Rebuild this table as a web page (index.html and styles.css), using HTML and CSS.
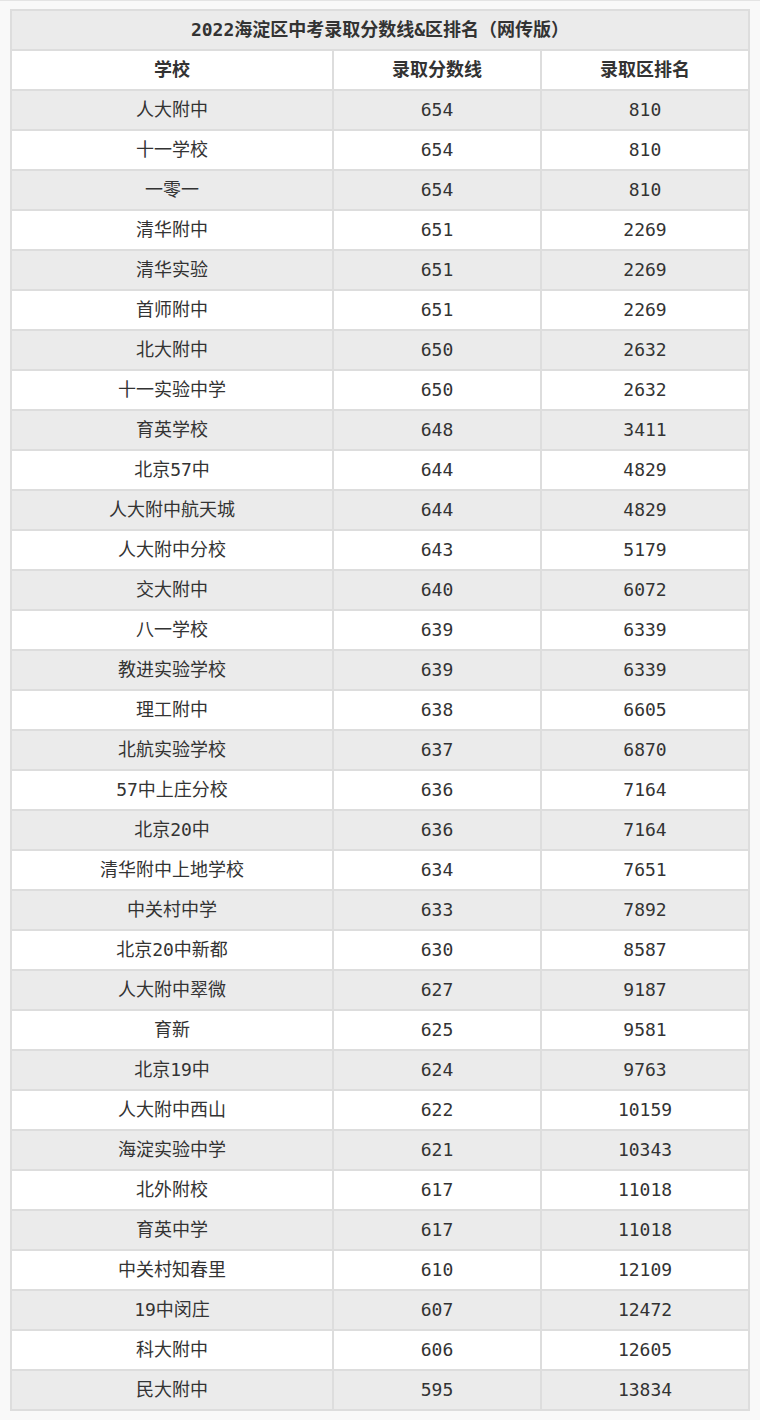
FILE: index.html
```html
<!DOCTYPE html>
<html lang="zh-CN">
<head>
<meta charset="utf-8">
<title>2022海淀区中考录取分数线&amp;区排名（网传版）</title>
<link rel="stylesheet" href="styles.css">
</head>
<body>
<table class="score-table">
  <colgroup>
    <col class="col-school">
    <col class="col-score">
    <col class="col-rank">
  </colgroup>
  <thead>
    <tr class="title-row"><th colspan="3">2022海淀区中考录取分数线&amp;区排名（网传版）</th></tr>
    <tr class="head-row"><th>学校</th><th>录取分数线</th><th>录取区排名</th></tr>
  </thead>
  <tbody>
    <tr><td>人大附中</td><td>654</td><td>810</td></tr>
    <tr><td>十一学校</td><td>654</td><td>810</td></tr>
    <tr><td>一零一</td><td>654</td><td>810</td></tr>
    <tr><td>清华附中</td><td>651</td><td>2269</td></tr>
    <tr><td>清华实验</td><td>651</td><td>2269</td></tr>
    <tr><td>首师附中</td><td>651</td><td>2269</td></tr>
    <tr><td>北大附中</td><td>650</td><td>2632</td></tr>
    <tr><td>十一实验中学</td><td>650</td><td>2632</td></tr>
    <tr><td>育英学校</td><td>648</td><td>3411</td></tr>
    <tr><td>北京57中</td><td>644</td><td>4829</td></tr>
    <tr><td>人大附中航天城</td><td>644</td><td>4829</td></tr>
    <tr><td>人大附中分校</td><td>643</td><td>5179</td></tr>
    <tr><td>交大附中</td><td>640</td><td>6072</td></tr>
    <tr><td>八一学校</td><td>639</td><td>6339</td></tr>
    <tr><td>教进实验学校</td><td>639</td><td>6339</td></tr>
    <tr><td>理工附中</td><td>638</td><td>6605</td></tr>
    <tr><td>北航实验学校</td><td>637</td><td>6870</td></tr>
    <tr><td>57中上庄分校</td><td>636</td><td>7164</td></tr>
    <tr><td>北京20中</td><td>636</td><td>7164</td></tr>
    <tr><td>清华附中上地学校</td><td>634</td><td>7651</td></tr>
    <tr><td>中关村中学</td><td>633</td><td>7892</td></tr>
    <tr><td>北京20中新都</td><td>630</td><td>8587</td></tr>
    <tr><td>人大附中翠微</td><td>627</td><td>9187</td></tr>
    <tr><td>育新</td><td>625</td><td>9581</td></tr>
    <tr><td>北京19中</td><td>624</td><td>9763</td></tr>
    <tr><td>人大附中西山</td><td>622</td><td>10159</td></tr>
    <tr><td>海淀实验中学</td><td>621</td><td>10343</td></tr>
    <tr><td>北外附校</td><td>617</td><td>11018</td></tr>
    <tr><td>育英中学</td><td>617</td><td>11018</td></tr>
    <tr><td>中关村知春里</td><td>610</td><td>12109</td></tr>
    <tr><td>19中闵庄</td><td>607</td><td>12472</td></tr>
    <tr><td>科大附中</td><td>606</td><td>12605</td></tr>
    <tr><td>民大附中</td><td>595</td><td>13834</td></tr>
  </tbody>
</table>
</body>
</html>
```
FILE: styles.css
```css
html, body {
  margin: 0;
  padding: 0;
}

body {
  background: #f9f9f9;
  border-top: 1px solid #e4e4e4;
  padding: 8px 10px;
  font-family: "DejaVu Sans Mono", "Noto Sans CJK SC", monospace;
  font-size: 18px;
  color: #333333;
}

.score-table {
  width: 740px;
  table-layout: fixed;
  border-collapse: separate;
  border-spacing: 2px;
  background: #dddddd;
}

.col-school { width: 320px; }
.col-score { width: 206px; }
.col-rank { width: 206px; }

.score-table th,
.score-table td {
  height: 38px;
  padding: 0;
  line-height: 38px;
  text-align: center;
  white-space: nowrap;
  background: #ffffff;
}

.score-table th {
  font-weight: bold;
}

.title-row th {
  background: #ebebeb;
}

.score-table tbody tr:nth-child(odd) td {
  background: #ebebeb;
}
```
